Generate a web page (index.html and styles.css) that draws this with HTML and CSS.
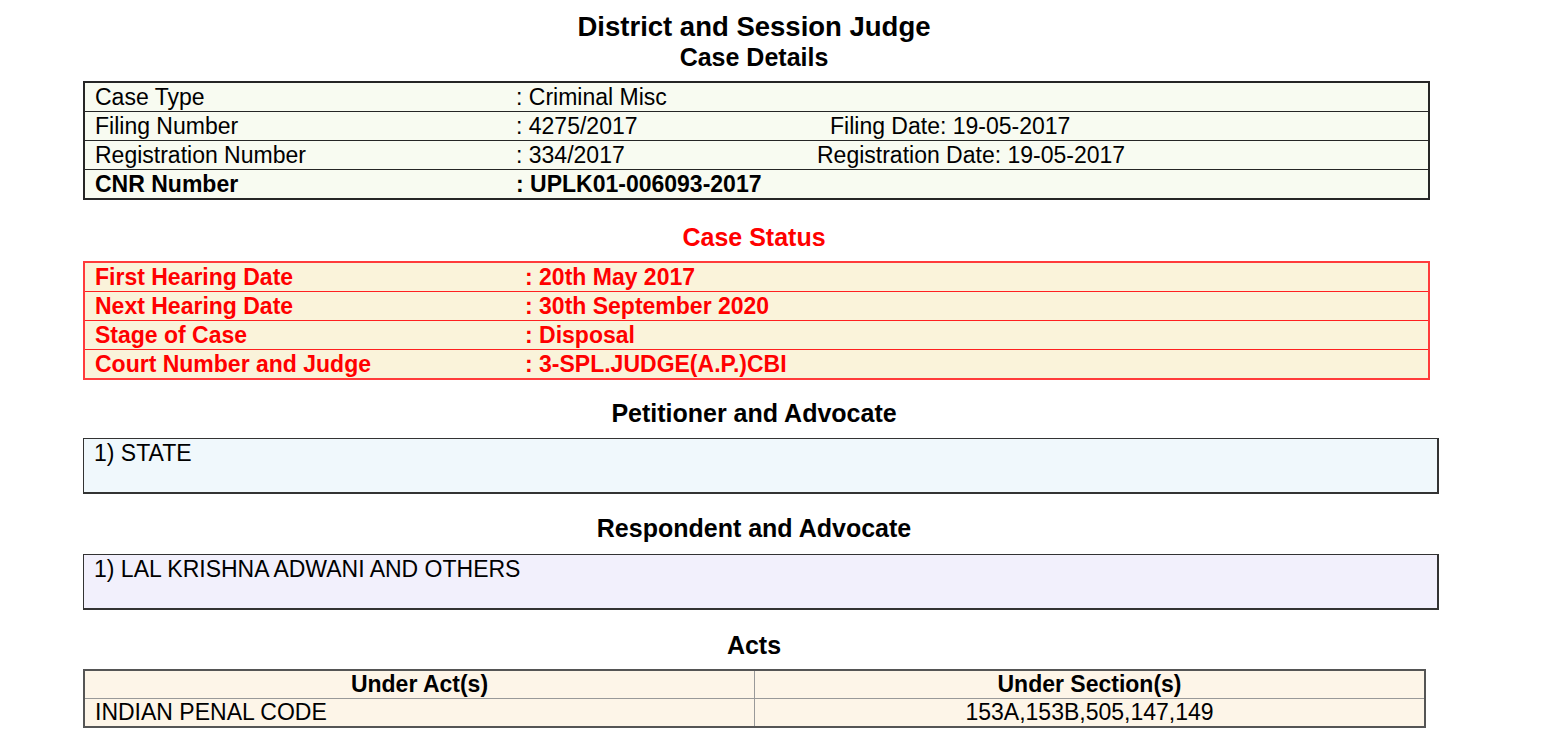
FILE: index.html
```html
<!DOCTYPE html>
<html>
<head>
<meta charset="utf-8">
<link rel="stylesheet" href="styles.css">
</head>
<body>
<div class="page">
  <h2 class="title">District and Session Judge</h2>
  <h3 class="subtitle">Case Details</h3>
  <table class="details">
    <tr><td class="c1">Case Type</td><td class="c2">: Criminal Misc</td><td class="c3"></td></tr>
    <tr><td class="c1">Filing Number</td><td class="c2">: 4275/2017</td><td class="c3"><span class="fd">Filing Date: 19-05-2017</span></td></tr>
    <tr><td class="c1">Registration Number</td><td class="c2">: 334/2017</td><td class="c3"><span class="rd">Registration Date: 19-05-2017</span></td></tr>
    <tr class="bold"><td class="c1">CNR Number</td><td class="c2">: UPLK01-006093-2017</td><td class="c3"></td></tr>
  </table>

  <h3 class="heading status-heading red">Case Status</h3>
  <table class="status">
    <tr><td class="s1">First Hearing Date</td><td class="s2">: 20th May 2017</td></tr>
    <tr><td class="s1">Next Hearing Date</td><td class="s2">: 30th September 2020</td></tr>
    <tr><td class="s1">Stage of Case</td><td class="s2">: Disposal</td></tr>
    <tr><td class="s1">Court Number and Judge</td><td class="s2">: 3-SPL.JUDGE(A.P.)CBI</td></tr>
  </table>

  <h3 class="heading">Petitioner and Advocate</h3>
  <div class="party petitioner">1) STATE</div>

  <h3 class="heading respondent-heading">Respondent and Advocate</h3>
  <div class="party respondent">1) LAL KRISHNA ADWANI AND OTHERS</div>

  <h3 class="heading acts-heading">Acts</h3>
  <table class="acts">
    <tr><th>Under Act(s)</th><th>Under Section(s)</th></tr>
    <tr><td class="a1">INDIAN PENAL CODE</td><td class="a2">153A,153B,505,147,149</td></tr>
  </table>
</div>
</body>
</html>
```

FILE: styles.css
```css
html, body {
  margin: 0;
  padding: 0;
  background: #fff;
}
body {
  font-family: "Liberation Sans", Arial, sans-serif;
  color: #000;
}
.page {
  padding: 12px 0 0 83px;
  width: 1356px;
}
.title {
  margin: 0;
  text-align: center;
  font-size: 27.5px;
  line-height: 30px;
  width: 1342px;
}
.subtitle, .heading {
  margin: 0;
  text-align: center;
  font-size: 25px;
  line-height: 30px;
  width: 1342px;
}
.subtitle { margin-bottom: 9px; }
.heading { margin: 18px 0 10px; }
.status-heading { margin: 22px 0 9px; }
.respondent-heading { margin: 19px 0 11px; }
.acts-heading { margin: 20px 0 9px; }
.red { color: #ff0000; }
table {
  border-collapse: collapse;
  font-size: 23px;
}
td, th {
  padding: 0 10px;
  height: 28px;
  line-height: 26px;
  vertical-align: middle;
}
.details {
  width: 1347px;
  background: #f8fbf1;
  border: 2px solid #262626;
}
.details td { border-top: 1px solid #262626; border-bottom: 1px solid #262626; }
.details .c1 { width: 401px; }
.details .c2 { width: 290px; }
.details .c3 { padding-left: 0; }
.details .fd { margin-left: 14px; }
.details .rd { margin-left: 1px; }
.bold td { font-weight: bold; }
.status {
  width: 1347px;
  background: #faf3da;
  border: 2px solid #ff3b3b;
  color: #ff0000;
  font-weight: bold;
}
.status td { border-top: 1.5px solid #ff2020; border-bottom: 1px solid #ff2020; }
.status .s1 { width: 410px; }
.party {
  height: 56px;
  border: 1px solid #333;
  border-right-width: 2px;
  border-bottom-width: 2px;
  padding: 1px 0 0 10px;
  font-size: 23px;
  line-height: 26px;
  box-sizing: border-box;
  width: 1356px;
}
.petitioner { background: #f0f8fc; }
.respondent { background: #f2f0fc; }
.acts {
  width: 1343px;
  background: #fdf5e8;
  border: 2px solid #555;
}
.acts th, .acts td { border: 1px solid #999; height: 27px; line-height: 25px; }
.acts th { width: 50%; text-align: center; font-weight: bold; }
.acts .a2 { text-align: center; }
```
